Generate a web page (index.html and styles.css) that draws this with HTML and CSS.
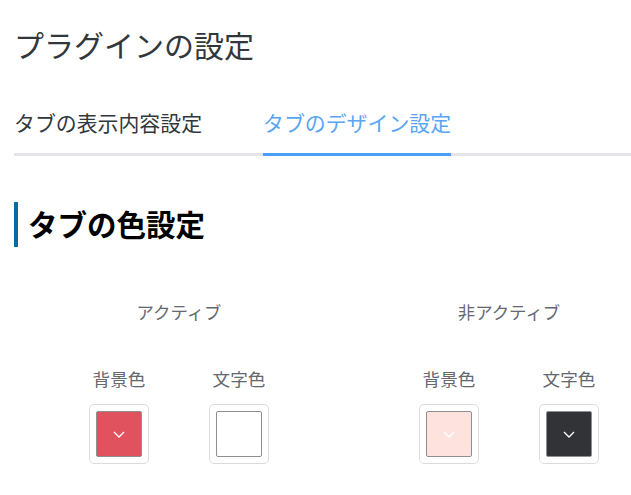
FILE: index.html
```html
<!DOCTYPE html>
<html lang="ja">
<head>
<meta charset="utf-8">
<title>プラグインの設定</title>
<link rel="stylesheet" href="styles.css">
</head>
<body>
<div class="wrap">
  <h1 class="page-title">プラグインの設定</h1>
  <nav class="tabs">
    <a class="tab">タブの表示内容設定</a>
    <a class="tab is-active">タブのデザイン設定</a>
  </nav>
  <h2 class="section-title">タブの色設定</h2>
  <div class="groups">
    <div class="group">
      <p class="group-title">アクティブ</p>
      <div class="pickers">
        <div class="picker">
          <span class="picker-label">背景色</span>
          <button class="swatch" type="button"><span class="chip chip-red"><svg width="12" height="7" viewBox="0 0 12 7"><path d="M1 1l5 5 5-5" fill="none" stroke="#fff" stroke-width="1.3"/></svg></span></button>
        </div>
        <div class="picker">
          <span class="picker-label">文字色</span>
          <button class="swatch" type="button"><span class="chip chip-white"><svg width="12" height="7" viewBox="0 0 12 7"><path d="M1 1l5 5 5-5" fill="none" stroke="#fff" stroke-width="1.3"/></svg></span></button>
        </div>
      </div>
    </div>
    <div class="group">
      <p class="group-title">非アクティブ</p>
      <div class="pickers">
        <div class="picker">
          <span class="picker-label">背景色</span>
          <button class="swatch" type="button"><span class="chip chip-pink"><svg width="12" height="7" viewBox="0 0 12 7"><path d="M1 1l5 5 5-5" fill="none" stroke="#fff" stroke-width="1.3"/></svg></span></button>
        </div>
        <div class="picker">
          <span class="picker-label">文字色</span>
          <button class="swatch" type="button"><span class="chip chip-dark"><svg width="12" height="7" viewBox="0 0 12 7"><path d="M1 1l5 5 5-5" fill="none" stroke="#fff" stroke-width="1.3"/></svg></span></button>
        </div>
      </div>
    </div>
  </div>
</div>
</body>
</html>
```
FILE: styles.css
```css
html, body {
  margin: 0;
  padding: 0;
  background: #fff;
}
body {
  font-family: "Noto Sans CJK JP", "Noto Sans", sans-serif;
  color: #32373c;
}
.wrap {
  padding-left: 14px;
}
.page-title {
  margin: 26px 0 0;
  font-size: 30px;
  line-height: 36px;
  font-weight: 400;
  color: #32373c;
}
.tabs {
  display: flex;
  gap: 61px;
  margin-top: 46px;
  border-bottom: 3px solid #e2e4e7;
}
.tab {
  font-size: 20.9px;
  line-height: 29px;
  padding-bottom: 16px;
  margin-bottom: -3px;
  border-bottom: 3px solid transparent;
  color: #32373c;
  cursor: pointer;
}
.tab.is-active {
  color: #5aa5f2;
  border-bottom-color: #4a9ff5;
}
.section-title {
  margin: 46px 0 0;
  border-left: 4px solid #0b6ba0;
  padding: 0 0 3px 10px;
  font-size: 29.5px;
  line-height: 42px;
  font-weight: 700;
  color: #000;
}
.groups {
  display: grid;
  grid-template-columns: 330px 1fr;
  margin-top: 53px;
}
.group {
  width: 240px;
  padding-left: 45px;
  text-align: center;
}
.group-title {
  margin: 0;
  font-size: 17.4px;
  line-height: 24px;
  color: #646970;
}
.pickers {
  display: flex;
  margin-top: 43px;
}
.picker {
  width: 120px;
  display: flex;
  flex-direction: column;
  align-items: center;
}
.picker-label {
  font-size: 17.6px;
  line-height: 24px;
  color: #646970;
}
.swatch {
  margin-top: 13px;
  width: 60px;
  height: 60px;
  padding: 6px;
  border: 1px solid #dcdcde;
  border-radius: 5px;
  background: #fff;
  box-sizing: border-box;
  cursor: pointer;
}
.chip {
  display: flex;
  align-items: center;
  justify-content: center;
  width: 46px;
  height: 46px;
  box-sizing: border-box;
  border: 1px solid #8c8f94;
  border-radius: 2px;
}
.chip svg {
  display: block;
}
.chip-red { background: #e0525e; }
.chip-white { background: #fff; }
.chip-pink { background: #fde2de; }
.chip-dark { background: #313336; }
```
